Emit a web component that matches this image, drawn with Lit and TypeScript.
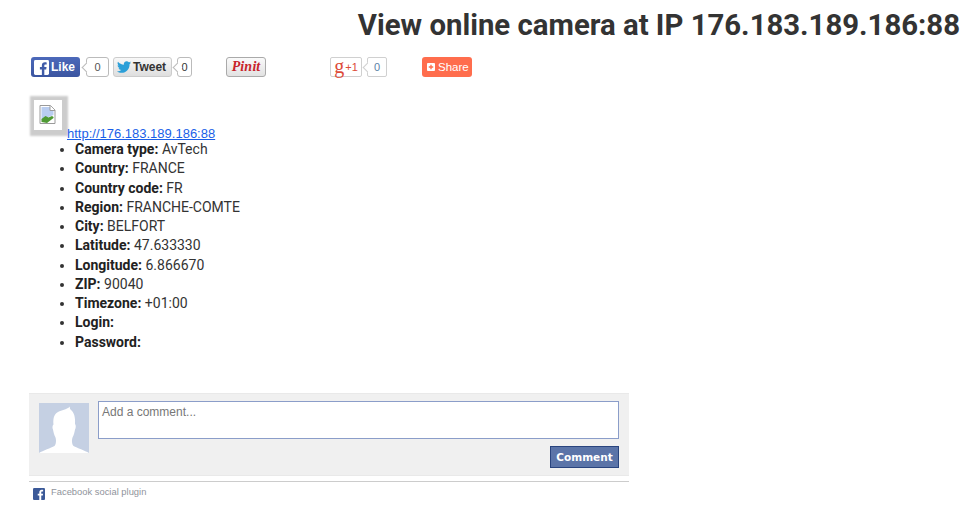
import { LitElement, html, css } from "lit";
import { customElement } from "lit/decorators.js";

const rows: [string, string][] = [
  ["Camera type:", "AvTech"],
  ["Country:", "FRANCE"],
  ["Country code:", "FR"],
  ["Region:", "FRANCHE-COMTE"],
  ["City:", "BELFORT"],
  ["Latitude:", "47.633330"],
  ["Longitude:", "6.866670"],
  ["ZIP:", "90040"],
  ["Timezone:", "+01:00"],
  ["Login:", ""],
  ["Password:", ""],
];

const fbF = html`<svg class="fill" viewBox="0 0 16 16"><rect width="16" height="16" rx="1.5" fill="currentColor"></rect><path d="M11 16V10h2l.4-2.5H11V6c0-.8.3-1.2 1.2-1.2h1.3V2.6C13.2 2.5 12.5 2.4 11.6 2.4 9.7 2.4 8.4 3.6 8.4 5.7v1.8H6.3V10h2.1v6z" fill="#fff"></path></svg>`;

@customElement("app-root")
export class AppRoot extends LitElement {
  static styles = css`
    :host { display: block; width: 968px; height: 513px; overflow: hidden; background: #fff; font-family: Roboto, "Liberation Sans", Arial, sans-serif; font-size: 14px; color: #333; }
    h1 { margin: 0; padding: 9px 8px 0 0; height: 41px; box-sizing: border-box; text-align: right; font-size: 29.33px; line-height: 32px; font-weight: bold; color: #333; white-space: nowrap; }
    .share { display: flex; align-items: flex-start; height: 20px; margin: 16px 0 0 31px; font-family: "Liberation Sans", Arial, sans-serif; }
    .btn { box-sizing: border-box; height: 20px; display: flex; align-items: center; border-radius: 3px; font-size: 12px; font-weight: bold; white-space: nowrap; }
    .fill { display: block; }
    .like { width: 49px; background: linear-gradient(#4c69ba, #3b55a0); color: #fff; padding-left: 3px; gap: 2px; font-size: 12px; }
    .like svg { width: 15px; height: 15px; }
    .like svg rect { fill: #fff; }
    .like svg path { fill: #3f5ba8; }
    .count { position: relative; box-sizing: border-box; height: 20px; border: 1px solid #bbb; border-radius: 3px; background: #fff; font-size: 11px; color: #555; font-weight: normal; display: flex; align-items: center; justify-content: center; }
    .count::before { content: ""; position: absolute; left: -4px; top: 6px; width: 6px; height: 6px; background: #fff; border-left: 1px solid #bbb; border-bottom: 1px solid #bbb; transform: rotate(45deg); }
    .c1 { width: 23px; margin: 0 4px 0 6px; }
    .tweet { width: 59px; border: 1px solid #ccc; background: linear-gradient(#f8f8f8, #dedede); color: #333; padding-left: 3px; gap: 2px; font-size: 12px; }
    .tweet svg { width: 14px; height: 12px; }
    .c2 { width: 15px; margin-left: 5px; color: #333; }
    .pin { width: 40px; margin-left: 34px; border: 1px solid #aaa; background: linear-gradient(#fafafa, #e2e2e2); color: #c8232c; font-family: "Liberation Serif", serif; font-style: italic; font-size: 14px; word-spacing: -3px; justify-content: center; }
    .gplus { width: 32px; margin-left: 64px; border: 1px solid #d0d0d0; border-radius: 2px; background: #fff; color: #dd4b39; justify-content: center; font-size: 11px; font-weight: normal; gap: 1px; }
    .gplus b { font-family: "Liberation Serif", serif; font-weight: normal; font-size: 20px; line-height: 16px; margin-top: -2px; }
    .c3 { width: 20px; margin-left: 5px; border-color: #d0d0d0; border-radius: 2px; color: #5b7fa8; }
    .c3::before { border-color: #d0d0d0; }
    .shr { width: 50px; margin-left: 35px; background: #ff6d4d; color: #fff; font-weight: normal; font-size: 11.5px; padding-left: 5px; gap: 3px; }
    .plus { width: 8px; height: 8px; }
    .content { margin: 19px 0 0 31px; }
    .linkline { display: flex; align-items: flex-end; height: 44px; }
    .thumb { box-sizing: border-box; flex: none; width: 28px; height: 30px; margin: 4px 5px 0 3px; padding: 5px; background: #fff; box-shadow: 1px 1px 2px 5px #ccc; align-self: flex-start; }
    .thumb svg { width: 17px; height: 19px; display: block; }
    a { color: #1a5fe8; text-decoration: underline; font-family: "Liberation Sans", Arial, sans-serif; font-size: 13px; line-height: 14px; margin-bottom: -1px; }
    ul { margin: 0; padding: 0 0 0 44px; list-style: disc; }
    li { height: 19.27px; line-height: 19.27px; color: #333; white-space: nowrap; }
    li b { color: #222; }
    .fb { width: 600px; margin: 41px 0 0 29px; font-family: "Liberation Sans", Arial, sans-serif; }
    .box { box-sizing: border-box; height: 83px; background: #f0f0f0; border-top: 1px solid #e9e9e9; border-bottom: 1px solid #e9e9e9; padding: 9px 10px 0; display: flex; gap: 9px; }
    .avatar { width: 50px; height: 50px; display: block; flex: none; }
    .main { flex: 1; display: flex; flex-direction: column; align-items: flex-end; margin-top: -2px; }
    .ta { box-sizing: border-box; width: 100%; height: 38px; background: #fff; border: 1px solid #8b9dc9; padding: 3px 3px; font-size: 12px; line-height: 15px; color: #777; }
    .post { box-sizing: border-box; margin-top: 7px; width: 69px; height: 22px; background: #5b74a8; border: 1px solid #29447e; color: #fff; font-weight: bold; display: flex; align-items: center; justify-content: center; font-family: "DejaVu Sans", sans-serif; font-size: 10.5px; }
    .foot { margin-top: 5px; border-top: 1px solid #ccc; padding: 3px 0 0 4px; display: flex; align-items: center; gap: 6px; font-size: 9.4px; color: #90949c; height: 14px; }
    .foot svg { width: 12px; height: 12px; color: #3b5998; margin-top: 4px; }
  `;

  render() {
    return html`
      <h1>View online camera at IP 176.183.189.186:88</h1>
      <div class="share">
        <div class="btn like">${fbF}Like</div>
        <div class="count c1">0</div>
        <div class="btn tweet">
          <svg viewBox="0 0 24 20"><path fill="#2b9fd8" d="M24 2.400c-.9.400-1.800.700-2.800.800 1-.6 1.800-1.600 2.200-2.700-1 .600-2 1-3.100 1.200C19.300.700 18 0 16.600 0c-2.700 0-4.900 2.200-4.900 4.900 0 .400 0 .800.100 1.100C7.700 5.800 4.100 3.900 1.700.900 1.200 1.600 1 2.500 1 3.400c0 1.700.900 3.200 2.200 4.100-.8 0-1.600-.2-2.200-.6v.100c0 2.400 1.700 4.400 3.900 4.800-.4.100-.8.200-1.300.2-.3 0-.6 0-.9-.1.600 2 2.400 3.400 4.600 3.400-1.700 1.300-3.800 2.100-6.100 2.100-.4 0-.8 0-1.200-.1C2.200 19.300 4.800 20 7.500 20c9.100 0 14-7.500 14-14v-.6c1-.7 1.800-1.600 2.500-3z"></path></svg>
          Tweet
        </div>
        <div class="count c2">0</div>
        <div class="btn pin">Pin it</div>
        <div class="btn gplus"><b>g</b>+1</div>
        <div class="count c3">0</div>
        <div class="btn shr">
          <svg class="plus" viewBox="0 0 9 9"><rect width="9" height="9" rx="1" fill="#fff"></rect><path d="M4.500 2v5M2 4.500h5" stroke="#ff6d4d" stroke-width="1.500"></path></svg>
          Share
        </div>
      </div>
      <div class="content">
        <div class="linkline">
          <div class="thumb">
            <svg viewBox="0 0 16 19">
              <path d="M.5.500h10.500l4.500 4.500v13.500H.5z" fill="#fff" stroke="#9a9a9a"></path>
              <path d="M2 2h8.500l3.500 3.500V10L2 15z" fill="#b9cdf0"></path>
              <path d="M2 17v-3l4-3 3 1.500 3.500-1.500 1.500 1v1l-6.500 5z" fill="#4f9a34"></path>
              <path d="M10.500.5v5h5" fill="#fff" stroke="#9a9a9a"></path>
            </svg>
          </div>
          <a href="#">http://176.183.189.186:88</a>
        </div>
        <ul>
          ${rows.map(([k, v]) => html`<li><b>${k}</b> ${v}</li>`)}
        </ul>
      </div>
      <div class="fb">
        <div class="box">
          <svg class="avatar" viewBox="0 0 50 50">
            <rect width="50" height="50" fill="#c5d0e3"></rect>
            <path fill="#fff" d="M0 50C4 47.500 12 45 15.500 43 17 41.500 17.500 37.500 16.500 34.500 15 32 14.500 29 14 26.500 13 25 13.500 22 14.500 21.500 14 17 14.500 11 19 9 23 7 27 7 31 3.500 30.500 5 31 6 32 7 35 9.500 36.500 14 36 21 37 22 37 25 36 26.500 35.500 29 35 32 33.500 34.500 32.500 37.500 33 41.500 34.500 43 38 45 46 47.500 50 50z"></path>
          </svg>
          <div class="main">
            <div class="ta">Add a comment...</div>
            <div class="post">Comment</div>
          </div>
        </div>
        <div class="foot">${fbF}<span>Facebook social plugin</span></div>
      </div>
    `;
  }
}
